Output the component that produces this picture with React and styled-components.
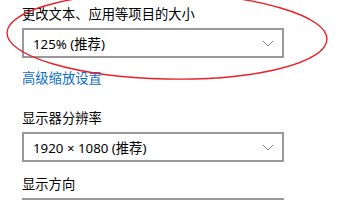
import React from "react";
import styled, { createGlobalStyle } from "styled-components";

const Global = createGlobalStyle`
  html, body { margin: 0; padding: 0; background: #fff; }
  body { width: 356px; height: 200px; overflow: hidden; }
`;

const Page = styled.div`
  position: relative;
  width: 356px;
  height: 200px;
  overflow: hidden;
  box-sizing: border-box;
  padding: 4px 0 0 22px;
  display: flex;
  flex-direction: column;
  font-family: "Noto Sans", "Noto Sans CJK SC", sans-serif;
  color: #000;
`;

const Label = styled.div`
  font-size: 13.3px;
  line-height: 20px;
  height: 20px;
  margin-top: ${(p) => p.$top || 0}px;
  white-space: nowrap;
`;

const Link = styled(Label)`
  color: #0a6cd0;
`;

const Select = styled.div`
  box-sizing: border-box;
  width: 262px;
  height: 30px;
  margin-top: 4px;
  border: 2px solid #999;
  background: #fff;
  display: flex;
  align-items: center;
  justify-content: space-between;
  padding: 0 8px 0 9px;
  font-size: 13.3px;
  flex-shrink: 0;
`;

const Chevron = () => (
  <svg width="12" height="7" viewBox="0 0 12 7">
    <path d="M1 1 L6 6 L11 1" fill="none" stroke="#777" strokeWidth="1" />
  </svg>
);

const Overlay = styled.svg`
  position: absolute;
  left: 0;
  top: 0;
  pointer-events: none;
`;

export default function App() {
  return (
    <>
      <Global />
      <Page>
        <Label>更改文本、应用等项目的大小</Label>
        <Select>
          <span>125% (推荐)</span>
          <Chevron />
        </Select>
        <Link $top={10}>高级缩放设置</Link>
        <Label $top={20}>显示器分辨率</Label>
        <Select>
          <span>1920 × 1080 (推荐)</span>
          <Chevron />
        </Select>
        <Label $top={12}>显示方向</Label>
        <Select />
        <Overlay width="356" height="200" viewBox="0 0 356 200">
          <ellipse
            cx="167"
            cy="36"
            rx="160"
            ry="43"
            transform="rotate(1.2 167 36)"
            fill="none"
            stroke="#e8202a"
            strokeWidth="1.4"
          />
        </Overlay>
      </Page>
    </>
  );
}
